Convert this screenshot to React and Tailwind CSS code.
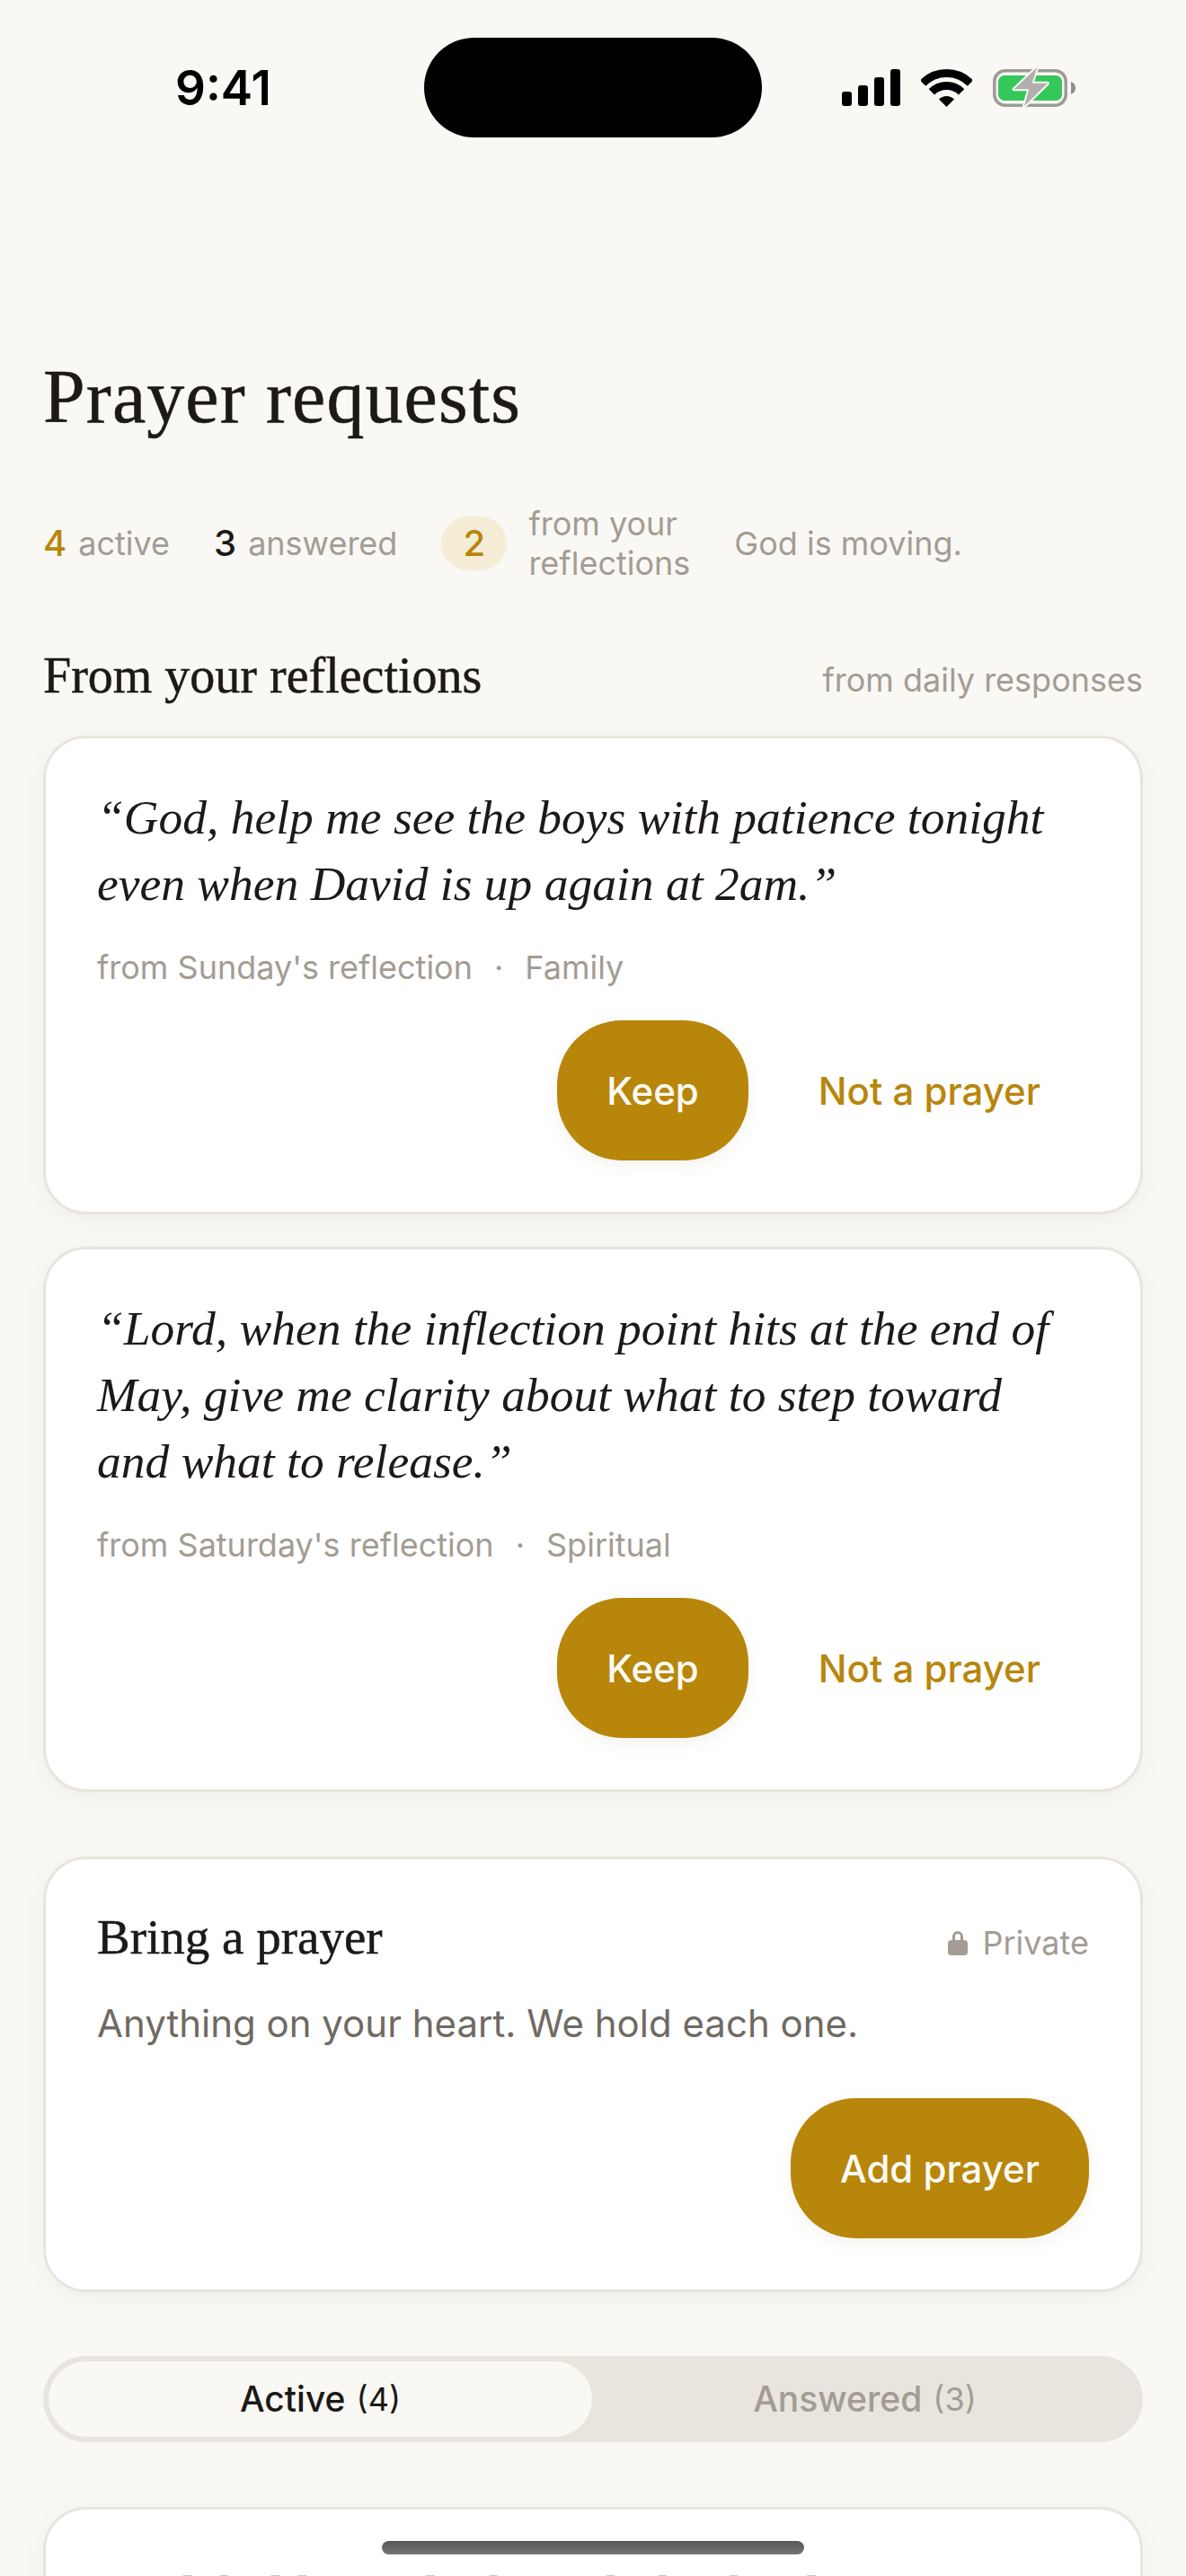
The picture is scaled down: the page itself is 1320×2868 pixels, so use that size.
import React from "react";

const serif = "font-['Liberation_Serif',serif]";
const inkStroke = "[-webkit-text-stroke:0.5px_#1c1917]";

function StatusIcons() {
  return (
    <div className="flex items-center gap-[23px]">
      <svg width="65" height="41" viewBox="0 0 65 41" fill="#000">
        <rect x="0" y="25" width="11" height="16" rx="3" />
        <rect x="18" y="18" width="11" height="23" rx="3" />
        <rect x="36" y="9" width="11" height="32" rx="3" />
        <rect x="54" y="0" width="11" height="41" rx="3" />
      </svg>
      <svg width="57" height="42" viewBox="0 0 57 42" fill="none" stroke="#000">
        <path d="M2 15.5A37.5 37.5 0 0 1 55 15.5" strokeWidth="9" />
        <path d="M11.9 25.4A23.5 23.5 0 0 1 45.1 25.4" strokeWidth="9" />
        <path d="M28.5 42L20 33.5A12 12 0 0 1 37 33.5Z" fill="#000" stroke="none" />
      </svg>
      <svg width="92" height="48" viewBox="0 0 92 48" fill="none">
        <rect x="1.75" y="4.75" width="79.5" height="38.5" rx="12" stroke="#9c9b98" strokeWidth="3.5" />
        <rect x="6" y="10" width="71" height="28" rx="7" fill="#34c759" />
        <path d="M87 17C90 18 92 20.5 92 24C92 27.5 90 30 87 31Z" fill="#8e8d8a" />
        <path
          d="M49.3 1L23.7 25.3H40.3L35 44.3L61 18.7H43.7Z"
          fill="#b0afab"
          stroke="#faf8f4"
          strokeWidth="4"
          strokeLinejoin="round"
          paintOrder="stroke"
        />
      </svg>
    </div>
  );
}

function StatusBar() {
  return (
    <div className="flex items-center pt-[42px] pl-[195px]">
      <div className="w-[277px] text-[53px] leading-[60px] font-semibold text-black">9:41</div>
      <div className="w-[376px] h-[111px] rounded-full bg-black" />
      <div className="ml-[89px]">
        <StatusIcons />
      </div>
    </div>
  );
}

function Stat({ value, label, valueClass }) {
  return (
    <div className="flex items-center gap-[13px]">
      <span className={`text-[40px] font-medium ${valueClass}`}>{value}</span>
      <span className="text-[#a39c94]">{label}</span>
    </div>
  );
}

function PrimaryButton({ children }) {
  return (
    <button className="h-[156px] px-[55px] rounded-[72px] bg-[#b8860b] text-[#fdfbf5] text-[42px] font-medium shadow-[0_6px_18px_rgba(120,100,50,0.08)]">
      {children}
    </button>
  );
}

function Card({ className = "", children }) {
  return (
    <div
      className={`bg-white border-[3px] border-[#e8e5de] rounded-[48px] shadow-[0_6px_24px_rgba(60,50,30,0.05)] ${className}`}
    >
      {children}
    </div>
  );
}

function SuggestionCard({ quote, day, area }) {
  return (
    <Card className="pt-[51px] pb-[57px] px-[57px]">
      <p className={`${serif} italic text-[53.5px] leading-[74px] text-[#1c1917]`}>{quote}</p>
      <div className="mt-[34px] flex gap-[24px] text-[36px] leading-[44px] text-[#a39c94]">
        <span>from {day}'s reflection</span>
        <span>·</span>
        <span>{area}</span>
      </div>
      <div className="mt-[37px] flex justify-end items-center gap-[24px]">
        <PrimaryButton>Keep</PrimaryButton>
        <button className="px-[54px] text-[42px] font-medium text-[#b8860b]">Not a prayer</button>
      </div>
    </Card>
  );
}

function App() {
  return (
    <div className="relative h-[2868px] overflow-hidden bg-[#faf8f4] font-['Inter',sans-serif]">
      <StatusBar />

      <div className="px-[48px]">
        <h1 className={`${serif} ${inkStroke} mt-[239px] text-[84px] leading-[100px] tracking-[1.1px] text-[#1c1917]`}>
          Prayer requests
        </h1>

        <div className="mt-[69px] h-[88px] flex items-center gap-[49px] text-[36px]">
          <Stat value="4" label="active" valueClass="text-[#b8860b]" />
          <Stat value="3" label="answered" valueClass="text-[#1c1917]" />
          <div className="flex items-center gap-[24px]">
            <span className="w-[73px] h-[60px] flex items-center justify-center rounded-full bg-[#f5edd6] text-[40px] font-medium text-[#b8860b]">
              2
            </span>
            <span className="leading-[44px] text-[#a39c94]">
              from your
              <br />
              reflections
            </span>
          </div>
          <span className="text-[#a39c94]">God is moving.</span>
        </div>

        <div className="mt-[73px] h-[60px] flex items-center justify-between">
          <h2 className={`${serif} ${inkStroke} text-[56px] text-[#1c1917]`}>From your reflections</h2>
          <span className="mt-[10px] text-[36px] text-[#a39c94]">from daily responses</span>
        </div>

        <div className="mt-[37px] flex flex-col gap-[36px]">
          <SuggestionCard
            quote={
              <>
                “God, help me see the boys with patience tonight
                <br />
                even when David is up again at 2am.”
              </>
            }
            day="Sunday"
            area="Family"
          />
          <SuggestionCard
            quote={
              <>
                “Lord, when the inflection point hits at the end of
                <br />
                May, give me clarity about what to step toward
                <br />
                and what to release.”
              </>
            }
            day="Saturday"
            area="Spiritual"
          />
        </div>

        <Card className="mt-[72px] pt-[57px] pb-[57px] px-[57px]">
          <div className="h-[60px] flex items-center justify-between">
            <h2 className={`${serif} ${inkStroke} text-[55px] text-[#1c1917]`}>Bring a prayer</h2>
            <div className="mt-[12px] flex items-center gap-[16px] text-[36px] text-[#a39c94]">
              <svg width="22" height="28" viewBox="0 0 22 28" fill="#a39c94">
                <path d="M5 12V7a6 6 0 0 1 12 0v5h-3V7a3 3 0 0 0-6 0v5Z" />
                <rect x="0" y="11" width="22" height="17" rx="4" />
              </svg>
              Private
            </div>
          </div>
          <p className="mt-[39px] text-[42px] leading-[54px] text-[#6f6a63]">Anything on your heart. We hold each one.</p>
          <div className="mt-[56px] flex justify-end">
            <PrimaryButton>Add prayer</PrimaryButton>
          </div>
        </Card>

        <div className="mt-[71px] h-[96px] p-[6px] flex rounded-full bg-[#e8e5de] text-[39px]">
          <div className="w-[605px] flex items-center justify-center gap-[12px] rounded-full bg-[#faf8f4] text-[#1c1917]">
            <span className="font-medium">Active</span>
            <span className="text-[36px]">(4)</span>
          </div>
          <div className="flex-1 flex items-center justify-center gap-[12px] text-[#a39c94]">
            <span className="font-medium">Answered</span>
            <span className="text-[36px]">(3)</span>
          </div>
        </div>

        <Card className="mt-[72px] h-[400px] pt-[58px] px-[57px]">
          <p className={`${serif} ${inkStroke} text-[56px] leading-[74px] text-[#1c1917]`}>
            Lord, hold Wendy through this hard season
          </p>
        </Card>
      </div>

      {/* home indicator sits on top of the scrolling content */}
      <div className="absolute left-[425px] top-[2829px] w-[470px] h-[15px] rounded-full bg-gradient-to-b from-[#555555] to-[#777777]" />
    </div>
  );
}

export default App;
